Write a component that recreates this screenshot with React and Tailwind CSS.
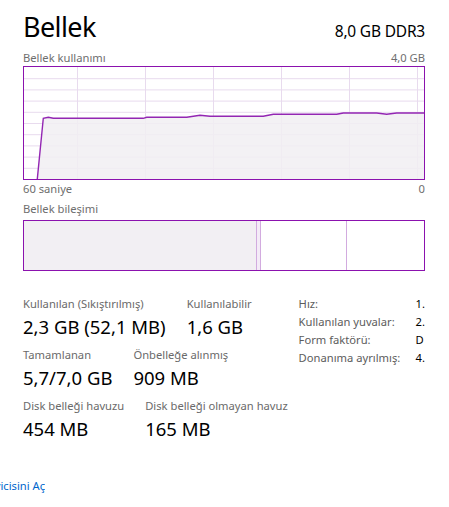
import React from 'react';

const pts = [
  [13.3, 112], [19.3, 51.3], [24.3, 50.3], [29.3, 51.3], [119.3, 51.3], [122.7, 50.3],
  [162.7, 50.3], [176, 48.3], [186, 49.3], [239.3, 49.3], [249.3, 47.3], [312.7, 47.3],
  [319.3, 46], [352.7, 46], [362.7, 47.3], [372.7, 46], [400, 46],
];

function UsageChart() {
  const line = pts.map(p => p.join(',')).join(' ');
  const area = `${line} 400,112 13.3,112`;
  const hLines = [11.2, 22.4, 33.6, 44.8, 56, 67.2, 78.4, 89.6, 100.8];
  const vLines = [53, 121, 189, 257, 325, 393];
  return (
    <div className="h-[114px] border border-[#8b12ae] bg-white">
      <svg width="400" height="112" viewBox="0 0 400 112" className="block">
        {hLines.map(y => (
          <line key={'h' + y} x1="0" x2="400" y1={y + 0.5} y2={y + 0.5} stroke="#e8dbee" strokeWidth="1" />
        ))}
        {vLines.map(x => (
          <line key={'v' + x} y1="0" y2="112" x1={x + 0.5} x2={x + 0.5} stroke="#e8dbee" strokeWidth="1" />
        ))}
        <polygon points={area} fill="#f1eef2" fillOpacity="0.85" />
        <polyline points={line} fill="none" stroke="#9326b3" strokeWidth="1.4" />
      </svg>
    </div>
  );
}

function Stat({ label, value }) {
  return (
    <div className="flex flex-col">
      <div className="text-[11.2px] leading-[16px] text-[#6a6a6a] whitespace-nowrap">{label}</div>
      <div className="mt-[3px] text-[18.5px] leading-[24px] text-black whitespace-nowrap">{value}</div>
    </div>
  );
}

export default function App() {
  return (
    <div className="w-[449px] h-[507px] bg-white overflow-hidden" style={{ fontFamily: '"Noto Sans", "Open Sans", sans-serif' }}>
      <div className="pl-[23px] pr-[24px]">
        <div className="flex items-baseline justify-between pt-[8px]">
          <div className="text-[27px] leading-[38px] tracking-[-0.6px] text-black">Bellek</div>
          <div className="text-[15.5px] tracking-[-0.2px] text-black">8,0 GB DDR3</div>
        </div>
        <div className="mt-[4px] flex justify-between text-[11.2px] leading-[16px] text-[#6e6e6e]">
          <span>Bellek kullanımı</span>
          <span>4,0 GB</span>
        </div>
        <UsageChart />
        <div className="mt-[1px] flex justify-between text-[11.2px] leading-[16px] text-[#6e6e6e]">
          <span>60 saniye</span>
          <span>0</span>
        </div>
        <div className="mt-[4px] text-[11.2px] leading-[16px] text-[#6e6e6e]">Bellek bileşimi</div>
        <div className="mt-[3px] flex h-[51px] border border-[#8b12ae]">
          <div className="w-[233px] bg-[#f2eff3] border-r border-[#d2abdf]" />
          <div className="w-[4px] bg-[#f4ebf7] border-r border-[#d2abdf]" />
          <div className="w-[86px] border-r border-[#d2abdf]" />
          <div className="flex-1" />
        </div>
        <div className="mt-[25px] flex items-start">
          <div className="w-[277px] flex flex-col gap-[8px]">
            <div className="flex gap-[21px]">
              <Stat label="Kullanılan (Sıkıştırılmış)" value="2,3 GB (52,1 MB)" />
              <Stat label="Kullanılabilir" value="1,6 GB" />
            </div>
            <div className="flex gap-[21px]">
              <Stat label="Tamamlanan" value="5,7/7,0 GB" />
              <Stat label="Önbelleğe alınmış" value="909 MB" />
            </div>
            <div className="flex gap-[21px]">
              <Stat label="Disk belleği havuzu" value="454 MB" />
              <Stat label="Disk belleği olmayan havuz" value="165 MB" />
            </div>
          </div>
          <div className="grid grid-cols-[117px_auto] text-[11.2px] leading-[18px] -mt-[1px]">
            <div className="text-[#5c5c5c]">Hız:</div>
            <div className="text-black">1.</div>
            <div className="text-[#5c5c5c]">Kullanılan yuvalar:</div>
            <div className="text-black">2.</div>
            <div className="text-[#5c5c5c]">Form faktörü:</div>
            <div className="text-black">D</div>
            <div className="text-[#5c5c5c]">Donanıma ayrılmış:</div>
            <div className="text-black">4.</div>
          </div>
        </div>
      </div>
      <div className="mt-[37px] w-[45px] overflow-hidden flex justify-end">
        <span className="whitespace-nowrap text-[11.2px] leading-[16px] text-[#0066cc]">Kaynak İzleyicisini Aç</span>
      </div>
    </div>
  );
}
